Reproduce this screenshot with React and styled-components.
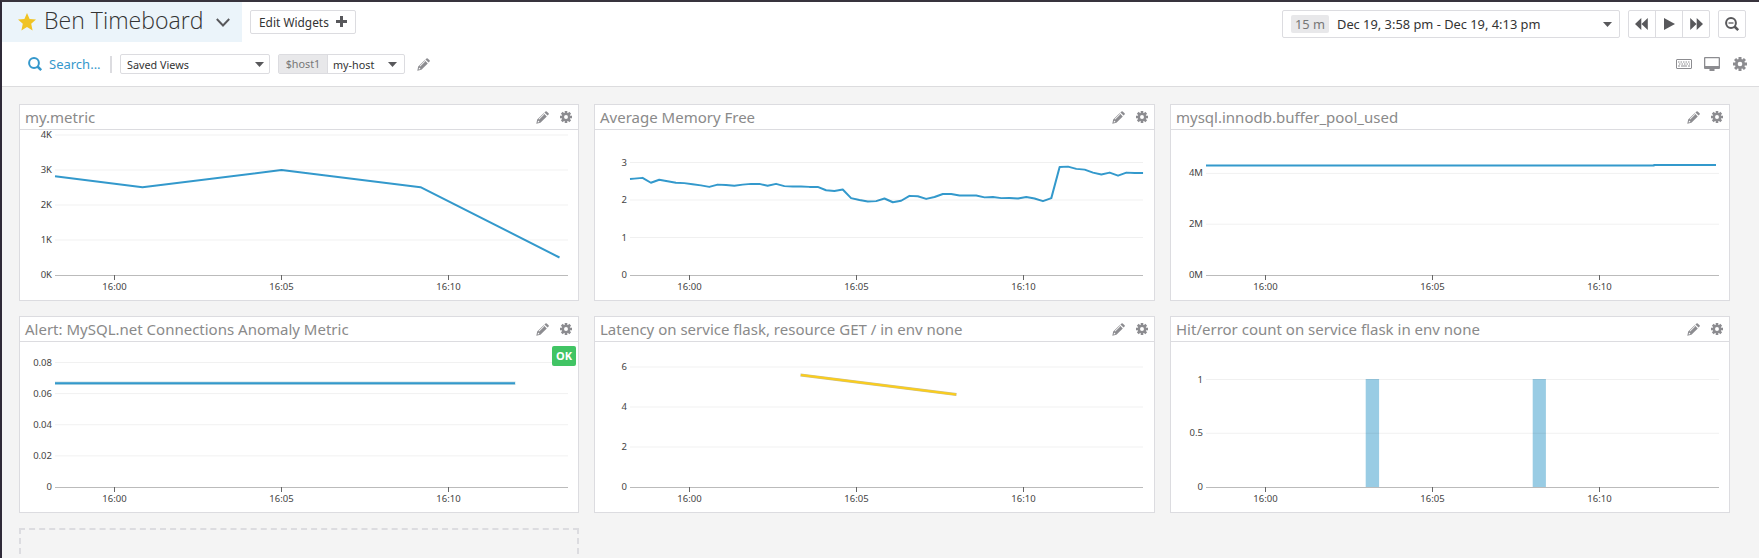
import React from "react";
import styled, { createGlobalStyle, css } from "styled-components";

const Global = createGlobalStyle`
  * { box-sizing: border-box; }
  html, body { margin: 0; height: 100%; }
  body {
    font-family: "Noto Sans", "Open Sans", sans-serif;
    color: #333;
    background: #f4f4f4;
    overflow: hidden;
  }
  svg { display: block; flex: none; overflow: visible; }
`;

const Page = styled.div`
  height: 558px;
  overflow: hidden;
  display: flex;
  flex-direction: column;
  border-top: 2px solid #38343d;
  border-left: 2px solid #2f2a38;
`;

const Header = styled.header`
  height: 85px;
  flex: none;
  background: #fff;
  border-bottom: 1px solid #dcdcde;
`;

const TopRow = styled.div`
  height: 40px;
  display: flex;
  align-items: flex-start;
`;

const TitleTab = styled.div`
  width: 240px;
  height: 40px;
  padding-left: 16px;
  display: flex;
  align-items: center;
  background: #ebf4fa;
`;

const Title = styled.h1`
  margin: 0 0 0 8px;
  width: 172px;
  height: 40px;
  font-family: "Open Sans", "Noto Sans", sans-serif;
  font-weight: 300;
  font-size: 23.1px;
  line-height: 36px;
  white-space: nowrap;
`;

const box = css`
  display: flex;
  align-items: center;
  background: #fff;
  border: 1px solid #dcdce0;
  border-radius: 2px;
  white-space: nowrap;
`;

const EditButton = styled.button`
  ${box}
  margin: 8px 0 0 8px;
  padding: 0 8px 1px 8px;
  width: 106px;
  height: 24px;
  justify-content: space-between;
  font: 11.9px "Noto Sans", sans-serif;
  color: #333;
`;

const TimeControls = styled.div`
  margin: 8px 13px 0 auto;
  display: flex;
  gap: 8px;
`;

const TimeRange = styled.div`
  ${box}
  width: 338px;
  height: 28px;
  padding: 0 7px 0 8px;
  font-size: 12.85px;
`;

const Span = styled.span`
  width: 38px;
  height: 18px;
  margin-right: 8px;
  border-radius: 2px;
  background: #e8e8ea;
  color: #777;
  line-height: 18px;
  text-align: center;
`;

const Push = styled.span`
  margin-left: auto;
`;

const ButtonGroup = styled.div`
  ${box}
  height: 28px;
`;

const IconButton = styled.div`
  width: ${(p) => p.$width || 27}px;
  height: 26px;
  display: flex;
  align-items: center;
  justify-content: center;
  & + & { border-left: 1px solid #dcdce0; }
`;

const FilterRow = styled.div`
  height: 44px;
  padding: 0 12px 0 26px;
  display: flex;
  align-items: center;
`;

const Search = styled.div`
  display: flex;
  align-items: center;
  gap: 7px;
  width: 82px;
  color: #3598cc;
  font-size: 13px;
  white-space: nowrap;
`;

const Divider = styled.div`
  width: 2px;
  height: 17px;
  margin-right: 8px;
  background: #dcdce0;
`;

const Select = styled.div`
  ${box}
  width: 150px;
  height: 20px;
  padding: 0 5px 0 6px;
  justify-content: space-between;
  font-size: 10.8px;
`;

const TemplateVar = styled.div`
  ${box}
  width: 127px;
  height: 20px;
  margin: 0 12px 0 8px;
  padding-right: 7px;
  font-size: 10.8px;
`;

const VarName = styled.span`
  width: 49px;
  height: 18px;
  margin-right: 5px;
  line-height: 18px;
  text-align: center;
  color: #777;
  background: #e8e8ea;
  border-right: 1px solid #dcdce0;
`;

const ViewIcons = styled.div`
  margin-left: auto;
  display: grid;
  grid-template-columns: 28px 29px 14px;
  align-items: center;
`;

const Board = styled.main`
  flex: none;
  padding: 17px 0 0 17px;
  display: grid;
  grid-template-columns: 560px 561px 560px;
  grid-auto-rows: 197px;
  gap: 15px;
`;

const Card = styled.section`
  background: #fff;
  border: 1px solid #dcdce0;
`;

const CardHeader = styled.div`
  height: 25px;
  padding: 0 6px 0 5px;
  display: flex;
  align-items: center;
  border-bottom: 1px solid #dcdce0;
`;

const CardTitle = styled.h2`
  flex: 1;
  margin: 0;
  font-weight: 400;
  font-size: 15px;
  line-height: 24px;
  color: #8a8a8a;
  white-space: nowrap;
`;

const CardActions = styled.div`
  display: flex;
  align-items: center;
  gap: 11px;
`;

const CardBody = styled.div`
  position: relative;
`;

const Status = styled.span`
  position: absolute;
  top: 4px;
  right: 2px;
  width: 24px;
  height: 20px;
  border-radius: 2px;
  background: #41c464;
  color: #fff;
  font-size: 11px;
  font-weight: 700;
  line-height: 20px;
  text-align: center;
`;

const Placeholder = styled.div`
  border: 2px dashed #dcdce0;
`;

const AxisText = styled.text`
  font-family: "Noto Sans", sans-serif;
  font-size: 9.5px;
  fill: #444;
`;

const Caret = () => (
  <svg width="9" height="5" viewBox="0 0 9 5"><path d="M0 0h9L4.5 5z" fill="#58585b" /></svg>
);

const Star = () => (
  <svg width="18" height="18" viewBox="0 0 18 18">
    <path d="M9 0l2.600 5.900 6.400.6-4.800 4.300 1.400 6.600L9 14l-5.600 3.400 1.400-6.600L0 6.500l6.400-.6z" fill="#f0c323" />
  </svg>
);

const Chevron = () => (
  <svg width="14" height="9" viewBox="0 0 14 9">
    <path d="M.8 1L7 7.500 13.200 1" fill="none" stroke="#58585b" strokeWidth="1.900" />
  </svg>
);

const Plus = () => (
  <svg width="11" height="11" viewBox="0 0 11 11"><path d="M4 0h3v4h4v3H7v4H4V7H0V4h4z" fill="#58585b" /></svg>
);

const Magnifier = ({ color, minus }) => (
  <svg width="14" height="14" viewBox="0 0 14 14" fill="none" stroke={color}>
    <circle cx="6" cy="6" r="4.900" strokeWidth="2" />
    <path d="M9.500 9.500l3.700 3.700" strokeWidth="2.500" />
    {minus && <path d="M3.500 6h5" strokeWidth="1.300" />}
  </svg>
);

const Pencil = () => (
  <svg width="13" height="13" viewBox="0 0 13 13" fill="#8c8c90">
    <path fillRule="evenodd" d="M.3 12.700l.9-4.100 6.400-6.400 3.200 3.200-6.400 6.400zm1.300-1.300l2-.5-1.500-1.500zm1.600-3l5-5-.6-.5-5 5z" />
    <path d="M8.400 1.400L9.500.4q.6-.5 1.200 0l1.900 1.900q.5.600 0 1.200l-1 1.100z" />
  </svg>
);

const Gear = ({ size = 12 }) => (
  <svg width={size} height={size} viewBox="0 0 14 14">
    <g fill="#8c8c90">
      {[0, 45, 90, 135].map((a) => (
        <rect key={a} x="5.500" y="0" width="3" height="14" transform={`rotate(${a} 7 7)`} />
      ))}
      <circle cx="7" cy="7" r="5" />
    </g>
    <circle cx="7" cy="7" r="2.300" fill="#fff" />
  </svg>
);

const Rewind = () => (
  <svg width="14" height="12" viewBox="0 0 14 12"><path d="M6.300 0v12L0 6zM12.800 0v12L6.500 6z" fill="#58585b" /></svg>
);

const Play = () => (
  <svg width="11" height="12" viewBox="0 0 11 12"><path d="M0 0l11 6L0 12z" fill="#58585b" /></svg>
);

const Forward = () => (
  <svg width="13" height="12" viewBox="0 0 13 12"><path d="M.2 0v12l6.300-6zM6.700 0v12L13 6z" fill="#58585b" /></svg>
);

const Keyboard = () => (
  <svg width="16" height="12" viewBox="0 0 16 12" fill="none" stroke="#8c8c90">
    <rect x=".5" y="1.500" width="15" height="9" rx=".5" />
    <path d="M2 4h12M3 6h11" strokeDasharray="1.500 1" />
    <path d="M2 8h2M5 8h6M12 8h2" />
  </svg>
);

const Monitor = () => (
  <svg width="16" height="14" viewBox="0 0 16 14">
    <path fillRule="evenodd" d="M1 0h14q1 0 1 1v10q0 1-1 1h-4.500v2h-5v-2H1q-1 0-1-1V1q0-1 1-1zm.3 1.300v7.700h13.400V1.300z" fill="#8c8c90" />
  </svg>
);

const LEFT = 35;
const RIGHT = 548;
const BASE = 145;
const BLUE = "#3399cc";
const X_TICKS = [["16:00", 94.5], ["16:05", 261.5], ["16:10", 428.5]];

const toPoints = (pts, unit) => pts.map(([x, v]) => `${x},${BASE - v * unit}`).join(" ");

const Chart = ({ ticks, unit, children }) => (
  <svg width="558" height="170" viewBox="0 0 558 170">
    {children}
    {ticks.map(([label, v]) => {
      const y = BASE - v * unit;
      return (
        <g key={label}>
          {v === 0
            ? <path d={`M${LEFT} ${y + 0.5}H${RIGHT}`} stroke="#bbb" />
            : <path d={`M${LEFT} ${y}H${RIGHT}`} stroke="rgba(0,0,0,.06)" />}
          <AxisText x={LEFT - 3} y={Math.round(y + 3)} textAnchor="end">{label}</AxisText>
        </g>
      );
    })}
    {X_TICKS.map(([label, x]) => (
      <g key={label}>
        <path d={`M${x} 145v5`} stroke="#666" />
        <AxisText x={x} y="160" textAnchor="middle">{label}</AxisText>
      </g>
    ))}
  </svg>
);

const Line = ({ points, unit, color = BLUE, width = 2 }) => (
  <polyline points={toPoints(points, unit)} fill="none" stroke={color} strokeWidth={width} strokeLinejoin="round" />
);

const MEMORY = [
  2.57, 2.59, 2.46, 2.54, 2.5, 2.46, 2.45, 2.42, 2.39, 2.35, 2.41, 2.4, 2.38, 2.41, 2.43, 2.43,
  2.38, 2.43, 2.37, 2.36, 2.36, 2.35, 2.35, 2.26, 2.24, 2.28, 2.05, 2, 1.96, 1.97, 2.04, 1.94,
  1.98, 2.11, 2.1, 2.03, 2.08, 2.16, 2.16, 2.12, 2.12, 2.12, 2.07, 2.08, 2.05, 2.055, 2.04, 2.08,
  2.04, 1.97, 2.05, 2.88, 2.89, 2.83, 2.81, 2.73, 2.68, 2.73, 2.65, 2.73, 2.72, 2.72,
];
const MEMORY_POINTS = [[35, 2.56], ...MEMORY.map((v, i) => [39.2 + i * 8.342, v])];

const Widget = ({ title, status, children }) => (
  <Card>
    <CardHeader>
      <CardTitle>{title}</CardTitle>
      <CardActions>
        <Pencil />
        <Gear />
      </CardActions>
    </CardHeader>
    <CardBody>
      {children}
      {status && <Status>{status}</Status>}
    </CardBody>
  </Card>
);

export default function App() {
  return (
    <Page>
      <Global />
      <Header>
        <TopRow>
          <TitleTab>
            <Star />
            <Title>Ben Timeboard</Title>
            <Chevron />
          </TitleTab>
          <EditButton>Edit Widgets <Plus /></EditButton>
          <TimeControls>
            <TimeRange>
              <Span>15 m</Span>
              Dec 19, 3:58 pm - Dec 19, 4:13 pm
              <Push><Caret /></Push>
            </TimeRange>
            <ButtonGroup>
              <IconButton $width={26}><Rewind /></IconButton>
              <IconButton><Play /></IconButton>
              <IconButton><Forward /></IconButton>
            </ButtonGroup>
            <ButtonGroup>
              <IconButton $width={26}><Magnifier color="#58585b" minus /></IconButton>
            </ButtonGroup>
          </TimeControls>
        </TopRow>
        <FilterRow>
          <Search><Magnifier color="#3598cc" />Search...</Search>
          <Divider />
          <Select>Saved Views <Caret /></Select>
          <TemplateVar>
            <VarName>$host1</VarName>
            my-host
            <Push><Caret /></Push>
          </TemplateVar>
          <Pencil />
          <ViewIcons>
            <Keyboard />
            <Monitor />
            <Gear size={14} />
          </ViewIcons>
        </FilterRow>
      </Header>
      <Board>
        <Widget title="my.metric">
          <Chart unit={35} ticks={[["4K", 4], ["3K", 3], ["2K", 2], ["1K", 1], ["0K", 0]]}>
            <Line unit={35} points={[[35, 2.82], [122.5, 2.51], [261.5, 3], [400.5, 2.51], [539.5, 0.5]]} />
          </Chart>
        </Widget>
        <Widget title="Average Memory Free">
          <Chart unit={37.5} ticks={[["3", 3], ["2", 2], ["1", 1], ["0", 0]]}>
            <Line unit={37.5} points={MEMORY_POINTS} />
          </Chart>
        </Widget>
        <Widget title="mysql.innodb.buffer_pool_used">
          <Chart unit={25.4} ticks={[["4M", 4], ["2M", 2], ["0M", 0]]}>
            <Line unit={25.4} points={[[35, 4.315], [483, 4.315], [483, 4.331], [545, 4.331]]} />
          </Chart>
        </Widget>
        <Widget title="Alert: MySQL.net Connections Anomaly Metric" status="OK">
          <Chart unit={1556} ticks={[["0.08", 0.08], ["0.06", 0.06], ["0.04", 0.04], ["0.02", 0.02], ["0", 0]]}>
            <Line unit={1556} color="#c9dfe4" width={3.5} points={[[35, 0.0667], [495.5, 0.0667]]} />
            <Line unit={1556} points={[[35, 0.0667], [495, 0.0667]]} />
          </Chart>
        </Widget>
        <Widget title="Latency on service flask, resource GET / in env none">
          <Chart unit={20} ticks={[["6", 6], ["4", 4], ["2", 2], ["0", 0]]}>
            <Line unit={20} color="#cbbf8a" width={3} points={[[205.5, 5.6], [361.5, 4.63]]} />
            <Line unit={20} color="#fbcd1c" points={[[206, 5.6], [361, 4.63]]} />
          </Chart>
        </Widget>
        <Widget title="Hit/error count on service flask in env none">
          <Chart unit={107.5} ticks={[["1", 1], ["0.5", 0.5], ["0", 0]]}>
            <rect x="194.700" y="37" width="13.400" height="108" fill="#99cce4" />
            <rect x="361.700" y="37" width="13.200" height="108" fill="#99cce4" />
          </Chart>
        </Widget>
        <Placeholder />
      </Board>
    </Page>
  );
}
